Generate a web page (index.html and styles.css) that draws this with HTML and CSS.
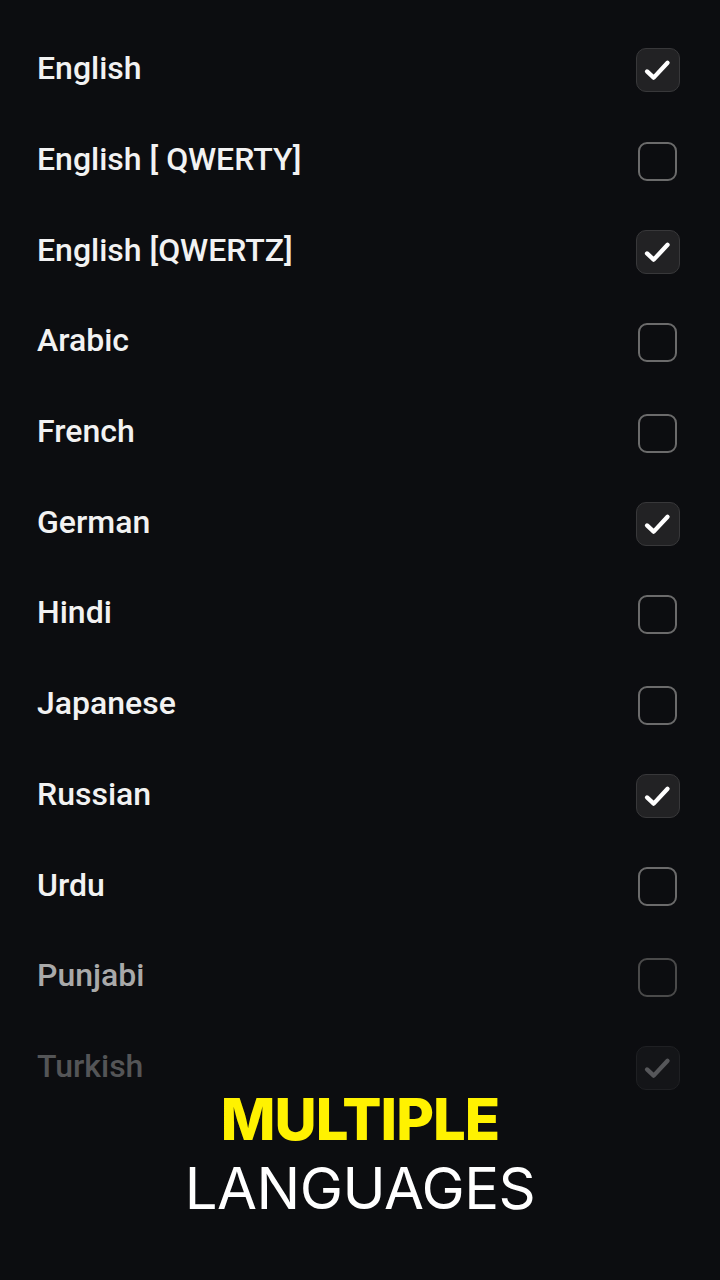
FILE: index.html
```html
<!DOCTYPE html>
<html>
<head>
<meta charset="utf-8">
<link rel="stylesheet" href="styles.css">
</head>
<body>
<div class="screen">
  <ul class="list">
    <li class="row"><span class="label">English</span><span class="box checked"><svg viewBox="0 0 44 44"><path d="M10.5 23.5l7 6.5L32 14.5"/></svg></span></li>
    <li class="row"><span class="label">English [ QWERTY]</span><span class="box"></span></li>
    <li class="row"><span class="label">English [QWERTZ]</span><span class="box checked"><svg viewBox="0 0 44 44"><path d="M10.5 23.5l7 6.5L32 14.5"/></svg></span></li>
    <li class="row"><span class="label">Arabic</span><span class="box"></span></li>
    <li class="row"><span class="label">French</span><span class="box"></span></li>
    <li class="row"><span class="label">German</span><span class="box checked"><svg viewBox="0 0 44 44"><path d="M10.5 23.5l7 6.5L32 14.5"/></svg></span></li>
    <li class="row"><span class="label">Hindi</span><span class="box"></span></li>
    <li class="row"><span class="label">Japanese</span><span class="box"></span></li>
    <li class="row"><span class="label">Russian</span><span class="box checked"><svg viewBox="0 0 44 44"><path d="M10.5 23.5l7 6.5L32 14.5"/></svg></span></li>
    <li class="row"><span class="label">Urdu</span><span class="box"></span></li>
    <li class="row fade1"><span class="label">Punjabi</span><span class="box"></span></li>
    <li class="row fade2"><span class="label">Turkish</span><span class="box checked"><svg viewBox="0 0 44 44"><path d="M10.5 23.5l7 6.5L32 14.5"/></svg></span></li>
  </ul>
  <div class="promo">
    <div class="promo-top">MULTIPLE</div>
    <div class="promo-bottom">LANGUAGES</div>
  </div>
</div>
</body>
</html>
```
FILE: styles.css
```css
html, body {
  margin: 0;
  padding: 0;
  background: #0c0d10;
}
.screen {
  width: 720px;
  height: 1280px;
  background: #0c0d10;
  overflow: hidden;
  font-family: Roboto, "Liberation Sans", sans-serif;
}
.list {
  list-style: none;
  margin: 0;
  padding: 23px 40px 0 37px;
}
.row {
  height: 90.7px;
  display: flex;
  align-items: center;
  justify-content: space-between;
}
.label {
  color: #f2f2f2;
  font-size: 32px;
  font-weight: 500;
  line-height: 40px;
}
.box {
  width: 39px;
  height: 39px;
  box-sizing: border-box;
  border: 2px solid #6b6b6b;
  border-radius: 9px;
  margin-right: 3px;
  margin-top: 4px;
  display: flex;
}
.box.checked {
  width: 44px;
  height: 44px;
  margin-right: 0;
  background: #222224;
  border: 1.5px solid #38383a;
  border-radius: 10px;
}
.box svg {
  width: 100%;
  height: 100%;
}
.box svg path {
  fill: none;
  stroke: #ffffff;
  stroke-width: 4.5;
  stroke-linecap: round;
  stroke-linejoin: round;
}
.fade1 .label { color: #a9a9a9; }
.fade1 .box { border-color: #4a4a4a; }
.fade2 .label { color: #545557; }
.fade2 .box.checked { background: #141518; border-color: #1f2023; }
.fade2 .box svg path { stroke: #56575a; }
.promo {
  text-align: center;
  margin-top: -26px;
}
.promo-top {
  color: #fff200;
  font-family: Inter, sans-serif;
  font-weight: 800;
  font-size: 58px;
  line-height: 68px;
  letter-spacing: -1px;
}
.promo-bottom {
  color: #ffffff;
  font-family: Inter, sans-serif;
  font-weight: 400;
  font-size: 58px;
  line-height: 70px;
  letter-spacing: -0.5px;
}
```
